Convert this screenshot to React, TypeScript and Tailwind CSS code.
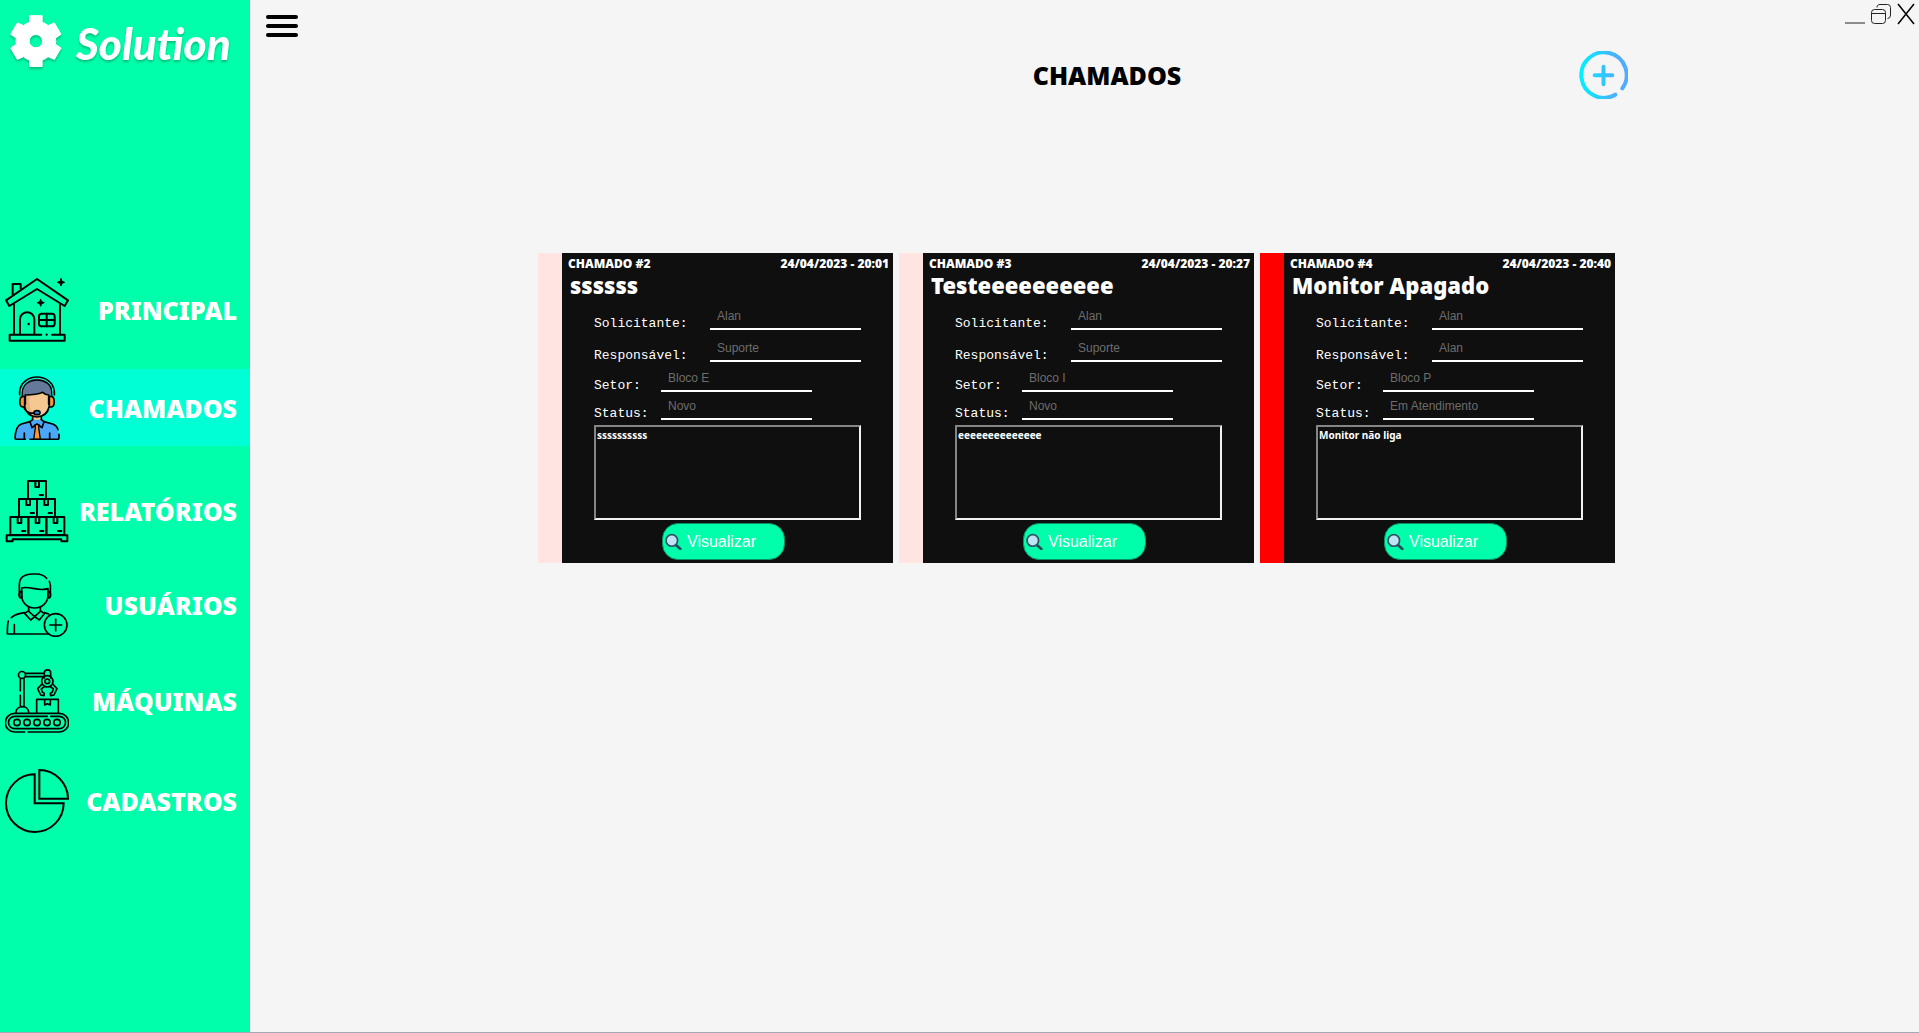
import React from "react";

type IconProps = { viewBox: string; children: React.ReactNode; width?: number };

function NavIcon({ viewBox, children, width = 5 }: IconProps) {
  return (
    <svg
      viewBox={viewBox}
      className="size-16 shrink-0"
      fill="none"
      stroke="#000"
      strokeWidth={width}
      strokeLinecap="round"
      strokeLinejoin="round"
      aria-hidden="true"
    >
      {children}
    </svg>
  );
}

const HouseIcon = () => (
  <NavIcon viewBox="15 54 192 192" width={6}>
    <path d="M111 57 204 121 194 138 111 87 28 138 18 121Z" />
    <path d="M38 104V72H62V86M42 134V222M180 134V222" />
    <path d="M124 224H29V242H194V224H156" />
    <path d="M60 222V178a21.500 21.500 0 0 1 43 0V222" />
    <rect x="117" y="161" width="47" height="38" rx="8" />
    <path d="M140 161V199M117 180H164" />
    <path d="M86 192v.1M140 224v.1" strokeWidth="7" />
    <path
      d="M183 56l3 8 8 3-8 3-3 8-3-8-8-3 8-3ZM122 118l3 7 8 3-8 3-3 8-3-8-8-3 8-3Z"
      fill="#000"
      strokeWidth="3"
    />
  </NavIcon>
);

const AgentIcon = () => (
  <NavIcon viewBox="15 347 192 192">
    <path d="M98 470V490L111 500 124 490V470Z" fill="#f6c891" stroke="none" />
    <path
      d="M46 537C45 505 50 492 72 488L92 481 111 500 130 481 152 488C172 493 177 508 177 537Z"
      fill="#4aa8fb"
      stroke="none"
    />
    <path d="M76 402C76 395 95 408 126 396L146 404V432C146 456 128 468 111 468S76 454 76 432Z" fill="#f6c891" stroke="none" />
    <path d="M76 440V404L90 405C84 430 92 456 106 468 90 466 76 458 76 440Z" fill="#e5b47f" stroke="none" />
    <path d="M66 404C64 370 86 355 111 355S158 370 156 404L146 404C138 402 132 398 126 394 110 404 90 402 76 404Z" fill="#65799a" stroke="none" />
    <path d="M76 432V404C95 404 112 403 128 396 134 402 140 404 146 404V432" />
    <path d="M67 408V396C68 370 90 359 111 359S155 370 155 396V408" strokeWidth="4" />
    <path d="M59 404V394C61 366 86 350 111 350S161 366 163 394V404" />
    <path d="M74 408V440H68C56 438 57 410 68 408ZM148 408V440H154C166 438 165 410 154 408Z" fill="#f79a35" />
    <path d="M74 440C78 458 92 468 111 470 132 468 144 456 147 440M72 440C76 456 92 460 104 458" />
    <ellipse cx="111" cy="457" rx="9" ry="6" fill="#2d8ae8" />
    <path d="M98 470V480L111 492 124 480V470" />
    <path d="M98 478 90 484 96 502 111 491 126 502 132 484 124 478" fill="#4aa8fb" />
    <path d="M105 493H117L116 502 121 537H101L106 502Z" fill="#f79a35" strokeWidth="4" />
    <path d="M90 484 64 491C52 495 46 512 45 534Q46 537 50 537H76M132 484 158 491C168 495 172 500 174 508M177 522V534Q177 537 172 537H90M73 518V535M149 518V535" />
  </NavIcon>
);

const Crate = ({ x, y }: { x: number; y: number }) => (
  <g>
    <rect x={x} y={y} width="54" height="54" />
    <path d={`M${x + 22} ${y}v18h11v-18M${x + 35} ${y + 42}h10`} />
  </g>
);

const BoxesIcon = () => (
  <NavIcon viewBox="15 56 192 192" width={6}>
    <Crate x={84} y={62} />
    <Crate x={57} y={116} />
    <Crate x={111} y={116} />
    <Crate x={31} y={170} />
    <Crate x={85} y={170} />
    <Crate x={139} y={170} />
    <path d="M20 225H202V243H184V237H38V243H20Z" />
  </NavIcon>
);

const UserIcon = () => (
  <NavIcon viewBox="15 339 192 192">
    <path d="M58 395V375C58 352 75 342 98 342H110C122 342 132 346 140 355M148 364C153 374 151 385 151 395" />
    <path d="M65 384C88 376 112 396 144 386V405C144 428 126 444 104 444S65 428 65 405Z" />
    <path d="M65 394Q57 394 57 404T65 414ZM144 394Q152 394 152 404T144 414Z" fill="#087a57" />
    <path d="M86 442V454L104 470 121 454V442" />
    <path d="M86 452 74 460 92 480 104 470 118 480 133 461 121 452" />
    <path d="M74 458C56 460 44 464 34 473M25 483C22 492 22 500 22 522H146M43 494V522M133 458 146 462" />
    <circle cx="167" cy="495" r="34" />
    <path d="M167 477V513M149 495H185" />
  </NavIcon>
);

const RobotIcon = () => (
  <NavIcon viewBox="15 57 192 192">
    <path d="M44 190H178A28 28 0 0 1 178 246H84M74 246H44A28 28 0 0 1 44 190" />
    <path d="M142 199H44A18 18 0 0 0 44 236H178A18 18 0 0 0 178 199H152" />
    {[51, 81, 111, 141, 171].map((cx) => (
      <circle key={cx} cx={cx} cy="217.500" r="9.500" />
    ))}
    <path d="M48 188C48 164 86 164 86 188M61 122V86M61 136V168M72 86V168" />
    <circle cx="66" cy="75" r="10.500" />
    <path d="M77 70H132M77 80H132M133 84V69a9.500 9.500 0 0 1 19 0V84" />
    <circle cx="142" cy="94" r="17" />
    <circle cx="142" cy="94" r="7" />
    <path d="M126 102 113 116 122 135 132 137 133 130 127 126 124 117 134 109M158 102 171 116 162 135 152 137 151 130 157 126 160 117 150 109" />
    <path d="M110 188V148H175V188M134 148V165L142 161 151 165V148" />
  </NavIcon>
);

const PieIcon = () => (
  <NavIcon viewBox="15 357 192 192" width={6}>
    <path d="M104 373A86.500 86.500 0 1 0 191 460H104Z" strokeLinejoin="miter" />
    <path d="M118 360A87 87 0 0 1 204 446H118Z" strokeLinejoin="miter" />
  </NavIcon>
);

const navItems = [
  { label: "PRINCIPAL", Icon: HouseIcon, spacing: "" },
  { label: "CHAMADOS", Icon: AgentIcon, spacing: "mt-[21px]", active: true },
  { label: "RELATÓRIOS", Icon: BoxesIcon, spacing: "mt-[26px]" },
  { label: "USUÁRIOS", Icon: UserIcon, spacing: "mt-[17px]" },
  { label: "MÁQUINAS", Icon: RobotIcon, spacing: "mt-[19px]" },
  { label: "CADASTROS", Icon: PieIcon, spacing: "mt-[23px]" },
];

const tickets = [
  { id: 2, date: "24/04/2023 - 20:01", title: "ssssss", requester: "Alan", owner: "Suporte", sector: "Bloco E", status: "Novo", text: "ssssssssss", stripe: "bg-[#ffe4e1]" },
  { id: 3, date: "24/04/2023 - 20:27", title: "Testeeeeeeeeee", requester: "Alan", owner: "Suporte", sector: "Bloco I", status: "Novo", text: "eeeeeeeeeeeeee", stripe: "bg-[#ffe4e1]" },
  { id: 4, date: "24/04/2023 - 20:40", title: "Monitor Apagado", requester: "Alan", owner: "Alan", sector: "Bloco P", status: "Em Atendimento", text: "Monitor não liga", stripe: "bg-[#ff0000]" },
];

function Field({ id, label, value, size }: { id: string; label: string; value: string; size: "wide" | "narrow" }) {
  return (
    <div className={size === "wide" ? "flex h-8 items-end" : "flex h-7 items-end"}>
      <label
        htmlFor={id}
        className={
          (size === "wide" ? "w-[116px]" : "w-[67px]") +
          " shrink-0 font-['Courier_New','Liberation_Mono',monospace] text-[13px] leading-3 text-white"
        }
      >
        {label}
      </label>
      <input
        id={id}
        readOnly
        value={value}
        className="h-[26px] w-[151px] border-b-2 border-white bg-transparent pl-[7px] font-['Liberation_Sans',sans-serif] text-xs text-[#6d6d6d] outline-none"
      />
    </div>
  );
}

function Ticket({ t }: { t: (typeof tickets)[number] }) {
  return (
    <article className="flex h-[310px] w-[355px] bg-[#0f0f0f]">
      <div className={"w-6 shrink-0 " + t.stripe} />
      <div className="flex min-w-0 flex-1 flex-col">
        <header className="flex justify-between pt-[3px] pr-1 pl-[6px] text-xs leading-4 font-black text-white">
          <span>CHAMADO #{t.id}</span>
          <time>{t.date}</time>
        </header>
        <h2 className="pl-2 text-[22px] leading-[26px] font-black text-white">{t.title}</h2>
        <div className="flex flex-col pl-8">
          <Field id={"solicitante-" + t.id} label="Solicitante:" value={t.requester} size="wide" />
          <Field id={"responsavel-" + t.id} label="Responsável:" value={t.owner} size="wide" />
          <div className="pt-[2px]">
            <Field id={"setor-" + t.id} label="Setor:" value={t.sector} size="narrow" />
            <Field id={"status-" + t.id} label="Status:" value={t.status} size="narrow" />
          </div>
          <textarea
            readOnly
            aria-label="Descrição"
            value={t.text}
            className="mt-[5px] h-[95px] w-[267px] resize-none border-2 border-t-[#858585] border-r-[#f2f2f2] border-b-[#f2f2f2] border-l-[#858585] bg-transparent px-[1px] py-0 text-[10px] leading-4 font-bold text-white outline-none"
          />
          <button
            type="button"
            className="mt-[3px] ml-[68px] flex h-[37px] w-[123px] items-center gap-[5px] rounded-2xl border border-[#0b8f66] bg-[#00ffaa] pl-[2px] font-['Liberation_Sans',sans-serif] text-base text-white"
          >
            <svg viewBox="414 862 50 50" className="size-[17px]" aria-hidden="true">
              <path d="M447 898 459 909" stroke="#24495b" strokeWidth="8" strokeLinecap="round" />
              <circle cx="434" cy="884" r="17" fill="#bfe3f4" stroke="#2f5163" strokeWidth="5" />
            </svg>
            Visualizar
          </button>
        </div>
      </div>
    </article>
  );
}

export default function App() {
  return (
    <div className="flex min-h-screen border-b border-[#a9a9b4] bg-[#f5f5f5] font-['Noto_Sans',sans-serif]">
      <aside className="w-[250px] shrink-0 bg-[#00ffaa]">
        <div className="flex h-[82px] items-center gap-[14px] pl-[10px] text-white drop-shadow-[0_2px_1px_rgba(0,0,0,0.25)]">
          <svg viewBox="32 46 157 157" className="size-[52px] shrink-0" aria-hidden="true">
            <path
              fillRule="evenodd"
              fill="#fff"
              stroke="#fff"
              strokeWidth="3"
              strokeLinejoin="round"
              d="M91 48H129V68Q139 71 147 78L166 70 186 104 169 116Q172 125 169 134L186 146 166 180 147 172Q139 179 129 182V202H91V182Q81 179 73 172L54 180 34 146 51 134Q48 125 51 116L34 104 54 70 73 78Q81 71 91 68ZM110 105A20 20 0 1 0 110 145 20 20 0 1 0 110 105Z"
            />
          </svg>
          <span className="pt-1 font-['Segoe_Script','Lato',cursive] text-[44px] leading-none font-black italic">Solution</span>
        </div>
        <nav className="mt-[189px] flex flex-col">
          {navItems.map(({ label, Icon, spacing, active }) => (
            <a
              key={label}
              href="#"
              aria-current={active ? "page" : undefined}
              className={
                "flex h-[77px] items-center justify-between pr-[13px] pl-[5px] text-[25px] font-black text-white " +
                spacing +
                (active ? " bg-[#00ffd5]" : "")
              }
            >
              <Icon />
              <span className="pt-[2px]">{label}</span>
            </a>
          ))}
        </nav>
      </aside>

      <main className="flex min-w-0 flex-1 flex-col">
        <div className="flex h-[51px] items-start justify-between">
          <button type="button" aria-label="Menu" className="mt-[15px] ml-4 flex w-8 flex-col gap-[5px]">
            <span className="h-1 w-full rounded-full bg-black" />
            <span className="h-1 w-full rounded-full bg-black" />
            <span className="h-1 w-full rounded-full bg-black" />
          </button>
          <div className="mt-[3px] mr-1 flex gap-[6px]">
            <button type="button" aria-label="Minimizar" className="flex h-[21px] w-5 items-end">
              <span className="h-[2px] w-full bg-[#8c8c8c]" />
            </button>
            <button type="button" aria-label="Restaurar">
              <svg viewBox="0 0 20 22" className="h-[22px] w-5" fill="none" stroke="#222" aria-hidden="true">
                <rect x="0.500" y="6.500" width="14" height="14" rx="3" />
                <path d="M.5 10.500H14.500M6 4.500C6 2.500 7 1.500 9 1.500H16.500Q19.500 1.500 19.500 4.500V12Q19.500 15.500 16.500 15.500" />
              </svg>
            </button>
            <button type="button" aria-label="Fechar">
              <svg viewBox="0 0 18 22" className="h-[22px] w-[18px]" stroke="#000" strokeWidth="1.500" aria-hidden="true">
                <path d="M1 1 17 21M17 1 1 21" />
              </svg>
            </button>
          </div>
        </div>

        <div className="flex justify-center pl-[45px]">
          <div className="grid w-full max-w-[1042px] grid-cols-[1fr_auto_1fr] items-center">
            <h1 className="col-start-2 text-[25px] leading-none font-black text-black">CHAMADOS</h1>
            <button type="button" aria-label="Novo chamado" className="justify-self-end">
              <svg viewBox="57 33 147 144" className="h-12 w-[49px]" fill="none" strokeLinecap="round" aria-hidden="true">
                <defs>
                  <linearGradient id="add" gradientUnits="userSpaceOnUse" x1="57" y1="0" x2="204" y2="0">
                    <stop offset="0" stopColor="#00f2fe" />
                    <stop offset="0.8" stopColor="#4facfe" />
                  </linearGradient>
                </defs>
                <path d="M187 145A68 68 0 1 0 166 164" stroke="url(#add)" strokeWidth="12" />
                <path d="M104 106H157M130.500 80V133" stroke="url(#add)" strokeWidth="12" />
              </svg>
            </button>
          </div>
        </div>

        <section className="mt-[154px] flex flex-wrap justify-center gap-[6px] pr-4">
          {tickets.map((t) => (
            <Ticket key={t.id} t={t} />
          ))}
        </section>
      </main>
    </div>
  );
}
